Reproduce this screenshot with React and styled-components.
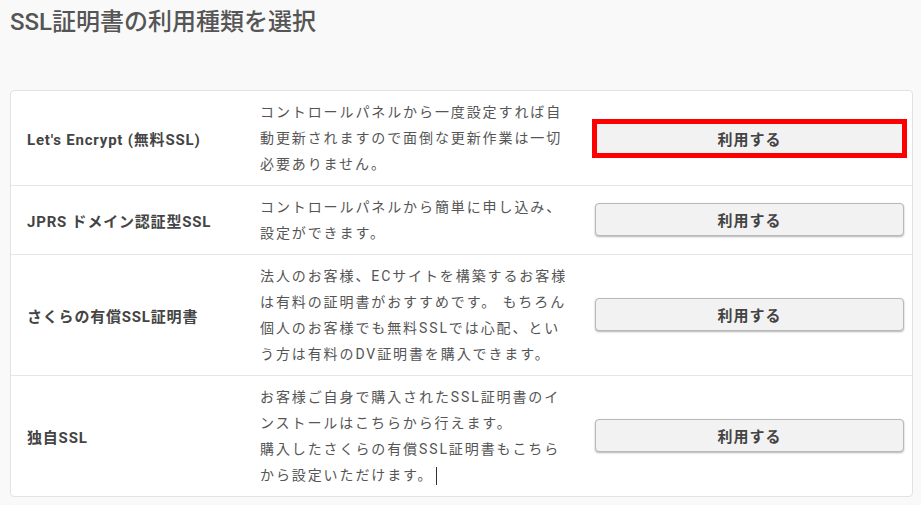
import React from "react";
import styled, { createGlobalStyle } from "styled-components";

const GlobalStyle = createGlobalStyle`
  body {
    margin: 0;
    background: #f9f9f9;
    font-family: Roboto, "Noto Sans CJK JP", sans-serif;
    color: #555;
  }
`

const Page = styled.div`
  padding: 0 8px 0 10px;
`

const Title = styled.h1`
  margin: 0;
  padding-top: 5px;
  height: 85px;
  font-size: 24px;
  line-height: 34px;
  font-weight: 500;
  letter-spacing: 0;
  color: #555;
`

const Card = styled.div`
  background: #fff;
  border: 1px solid #e2e2e2;
  border-radius: 4px;
`

const Row = styled.div`
  display: grid;
  grid-template-columns: 233px 335px 309px;
  align-items: center;
  padding: 8px 8px 8px 16px;
  border-top: ${(p) => (p.first ? "none" : "1px solid #e6e6e6")};
`

const Name = styled.div`
  font-size: 15px;
  font-weight: 700;
  color: #444;
  letter-spacing: 0.8px;
`

const Desc = styled.div`
  font-size: 14px;
  line-height: 26px;
  letter-spacing: 1.9px;
  color: #555;
  white-space: nowrap;
`

const Button = styled.button`
  height: 33px;
  width: 100%;
  margin-top: ${(p) => (p.selected ? "0" : "-2px")};
  border: 1px solid #b9b9b9;
  border-radius: ${(p) => (p.selected ? "0" : "4px")};
  background: #f2f2f2;
  box-shadow: ${(p) => (p.selected ? "none" : "0 1px 2px rgba(0, 0, 0, 0.3)")};
  font-family: inherit;
  font-size: 15px;
  font-weight: 700;
  color: #444;
  letter-spacing: 1px;
  cursor: pointer;
  outline: ${(p) => (p.selected ? "5px solid #f00" : "none")};
  outline-offset: -2px;
`

const Caret = styled.span`
  display: inline-block;
  width: 1px;
  height: 18px;
  margin-left: 2px;
  background: #333;
  vertical-align: middle;
`

const plans = [
  {
    name: "Let's Encrypt (無料SSL)",
    lines: ["コントロールパネルから一度設定すれば自", "動更新されますので面倒な更新作業は一切", "必要ありません。"],
    selected: true,
  },
  {
    name: "JPRS ドメイン認証型SSL",
    lines: ["コントロールパネルから簡単に申し込み、", "設定ができます。"],
  },
  {
    name: "さくらの有償SSL証明書",
    lines: [
      "法人のお客様、ECサイトを構築するお客様",
      "は有料の証明書がおすすめです。 もちろん",
      "個人のお客様でも無料SSLでは心配、とい",
      "う方は有料のDV証明書を購入できます。",
    ],
  },
  {
    name: "独自SSL",
    lines: [
      "お客様ご自身で購入されたSSL証明書のイ",
      "ンストールはこちらから行えます。",
      "購入したさくらの有償SSL証明書もこちら",
      "から設定いただけます。",
    ],
    caret: true,
  },
]

const App = () => {
  return (
    <Page>
      <GlobalStyle />
      <Title>SSL証明書の利用種類を選択</Title>
      <Card>
        {plans.map((plan, i) => (
          <Row key={plan.name} first={i === 0}>
            <Name>{plan.name}</Name>
            <Desc>
              {plan.lines.map((line, j) => (
                <div key={j}>
                  {line}
                  {plan.caret && j === plan.lines.length - 1 && <Caret />}
                </div>
              ))}
            </Desc>
            <Button selected={plan.selected}>利用する</Button>
          </Row>
        ))}
      </Card>
    </Page>
  )
}

export default App
